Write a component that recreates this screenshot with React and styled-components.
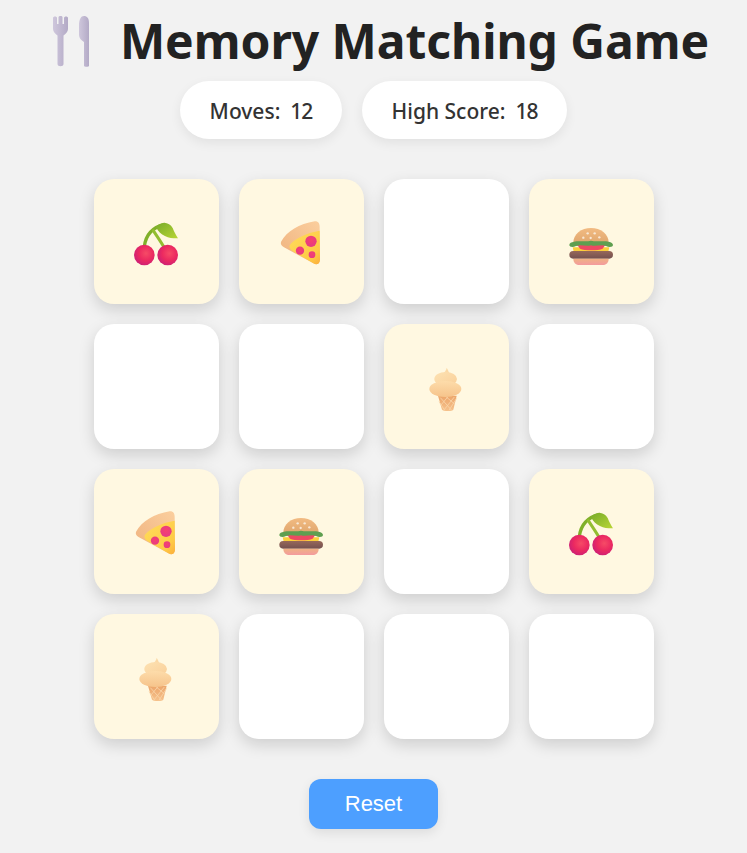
import React from 'react';
import styled, { createGlobalStyle } from 'styled-components';

const Global = createGlobalStyle`
  html, body { margin: 0; padding: 0; background: #f2f2f2; }
  body { font-family: "Noto Sans", "Open Sans", sans-serif; color: #222; }
`;

const Page = styled.main`
  display: flex;
  flex-direction: column;
  align-items: center;
  height: 853px;
  overflow: hidden;
`;

const Title = styled.h1`
  display: flex;
  align-items: center;
  gap: 12px;
  height: 81px;
  margin: 0 0 0 10px;
  font-family: "Noto Sans", "Open Sans", sans-serif;
  font-size: 48px;
  font-weight: 700;
  line-height: 81px;
  letter-spacing: -0.05px;
  color: #222;
  white-space: nowrap;
`;

const TitleIcon = styled.svg`
  width: 60px;
  height: 60px;
  flex: none;
`;

const Stats = styled.div`
  display: flex;
  gap: 20px;
  margin-bottom: 40px;
`;

const Pill = styled.div`
  display: flex;
  gap: 10px;
  align-items: center;
  justify-content: center;
  height: 58px;
  padding-top: 2px;
  box-sizing: border-box;
  width: ${p => p.$w}px;
  background: #fff;
  border-radius: 29px;
  box-shadow: 0 4px 12px rgba(0, 0, 0, 0.07);
  font-size: 21px;
  font-weight: 500;
  color: #333;
  white-space: nowrap;
`;

const Score = styled.span`
  letter-spacing: -1px;
`;

const Board = styled.div`
  display: grid;
  grid-template-columns: repeat(4, 125px);
  grid-auto-rows: 125px;
  gap: 20px;
`;

const Card = styled.div`
  display: flex;
  align-items: center;
  justify-content: center;
  border-radius: 20px;
  background: ${p => (p.$open ? '#fff8e1' : '#ffffff')};
  box-shadow: 0 6px 16px rgba(0, 0, 0, 0.15);
`;

const Emoji = styled.svg`
  width: 70px;
  height: 70px;
  margin: 7px 1px 0 0;
`;

const ResetButton = styled.button`
  width: 129px;
  height: 50px;
  margin-top: 40px;
  padding: 0;
  border: none;
  border-radius: 12px;
  background: #4d9fff;
  color: #fff;
  font-family: "Liberation Sans", Arial, sans-serif;
  font-size: 22px;
  box-shadow: 0 4px 12px rgba(0, 0, 0, 0.09);
`;

const Defs = () => (
  <svg width="0" height="0" style={{ position: 'absolute' }}>
    <defs>
      <radialGradient id="cherry" cx="0.58" cy="0.42" r="0.62">
        <stop offset="0" stopColor="#f64b66" />
        <stop offset="0.55" stopColor="#ec2a60" />
        <stop offset="1" stopColor="#cc1f76" />
      </radialGradient>
      <linearGradient id="leaf" x1="0" y1="0" x2="1" y2="1">
        <stop offset="0" stopColor="#78ac2a" />
        <stop offset="1" stopColor="#b9d535" />
      </linearGradient>
      <linearGradient id="crust" x1="0" y1="1" x2="1" y2="0">
        <stop offset="0" stopColor="#efb27e" />
        <stop offset="1" stopColor="#fbcf9e" />
      </linearGradient>
      <linearGradient id="cheese" x1="0" y1="0" x2="1" y2="1">
        <stop offset="0" stopColor="#ffdd5c" />
        <stop offset="0.75" stopColor="#fecb45" />
        <stop offset="1" stopColor="#fcae3c" />
      </linearGradient>
      <radialGradient id="pep" cx="0.5" cy="0.4" r="0.6">
        <stop offset="0" stopColor="#f6416f" />
        <stop offset="1" stopColor="#e63a84" />
      </radialGradient>
      <linearGradient id="bun" x1="0" y1="0" x2="0" y2="1">
        <stop offset="0" stopColor="#f2bb82" />
        <stop offset="1" stopColor="#dda36a" />
      </linearGradient>
      <linearGradient id="bunLow" x1="0" y1="0" x2="0" y2="1">
        <stop offset="0" stopColor="#efb283" />
        <stop offset="1" stopColor="#f49b9e" />
      </linearGradient>
      <linearGradient id="patty" x1="0" y1="0" x2="0" y2="1">
        <stop offset="0" stopColor="#96685a" />
        <stop offset="1" stopColor="#74504f" />
      </linearGradient>
      <linearGradient id="creamTop" x1="0" y1="0" x2="1" y2="1">
        <stop offset="0" stopColor="#fde2b2" />
        <stop offset="1" stopColor="#f9cf99" />
      </linearGradient>
      <linearGradient id="creamLow" x1="0" y1="0" x2="0" y2="1">
        <stop offset="0" stopColor="#fddcaa" />
        <stop offset="1" stopColor="#f6c48b" />
      </linearGradient>
      <linearGradient id="cone" x1="0" y1="0" x2="0" y2="1">
        <stop offset="0" stopColor="#eca56a" />
        <stop offset="1" stopColor="#f6c28c" />
      </linearGradient>
      <linearGradient id="cutlery" x1="0" y1="0" x2="1" y2="0">
        <stop offset="0" stopColor="#cfc7dc" />
        <stop offset="1" stopColor="#b3aac6" />
      </linearGradient>
    </defs>
  </svg>
);

const Cherry = () => (
  <Emoji viewBox="0 0 210 210">
    <g transform="translate(-3 0)">
      <path d="M73 110C76 82 90 54 133 43" fill="none" stroke="#80b02a" strokeWidth="10" strokeLinecap="round" />
      <path d="M100 62C110 78 122 94 132 112" fill="none" stroke="#93bd30" strokeWidth="9" strokeLinecap="round" />
      <path d="M108 50C124 34 148 36 158 54C163 66 168 76 174 85C152 86 120 80 108 50Z" fill="url(#leaf)" />
      <circle cx="73" cy="135" r="31" fill="url(#cherry)" />
      <circle cx="143" cy="135" r="31" fill="url(#cherry)" />
    </g>
  </Emoji>
);

const Pizza = () => (
  <Emoji viewBox="0 0 210 210">
    <path d="M46 94C62 64 100 42 146 34C156 33 161 40 161 50L162 150C161 162 152 166 142 160L54 112C44 106 43 100 46 94Z" fill="url(#crust)" />
    <path d="M74 102C90 84 124 68 161 62L162 150C161 162 152 166 142 160L78 122C70 116 68 108 74 102Z" fill="url(#cheese)" />
    <circle cx="135" cy="94" r="17" fill="url(#pep)" />
    <circle cx="102" cy="122" r="12.5" fill="url(#pep)" />
    <circle cx="138" cy="134" r="10" fill="url(#pep)" />
  </Emoji>
);

const Burger = () => (
  <Emoji viewBox="0 0 210 210">
    <path d="M52 98C52 72 76 54 105 54C134 54 158 72 158 98L158 108H52Z" fill="url(#bun)" />
    <g fill="#f8e8d6">
      <circle cx="95" cy="70" r="3.5" /><circle cx="116" cy="70" r="3.5" /><circle cx="82" cy="83" r="3.5" /><circle cx="104" cy="84" r="3.5" /><circle cx="130" cy="82" r="3.5" />
    </g>
    <path d="M50 112H160L156 128H54Z" fill="#fbcf3b" />
    <path d="M62 102H150L140 116C126 122 86 122 72 116Z" fill="#ee4a62" />
    <path d="M40 105C40 99 46 96 54 95C72 91 88 97 105 92C122 97 140 91 158 95C166 96 171 100 171 105C171 111 160 113 150 108C136 102 120 111 105 106C90 111 76 102 60 108C50 113 40 111 40 105Z" fill="#5f9f50" />
    <rect x="40" y="123" width="131" height="23" rx="11.5" fill="url(#patty)" />
    <path d="M52 146H158C158 157 152 165 140 165H70C58 165 52 157 52 146Z" fill="url(#bunLow)" />
  </Emoji>
);

const IceCream = () => (
  <Emoji viewBox="0 0 210 210">
    <path d="M81 122H137L127 164C125 169 96 169 93 164Z" fill="url(#cone)" />
    <g stroke="#f9d5a8" strokeWidth="2.5" fill="none">
      <path d="M88 128L122 166M106 126L132 148M84 140L100 164M130 126L98 166M110 126L90 150M137 130L114 166" />
    </g>
    <path d="M107 38C111 44 113 50 115 56C121 62 118 70 108 72H100C92 72 92 58 100 52C103 48 106 44 107 38Z" fill="url(#creamTop)" />
    <ellipse cx="104" cy="72" rx="34" ry="21" fill="url(#creamTop)" />
    <ellipse cx="103" cy="102" rx="48" ry="24" fill="url(#creamLow)" />
  </Emoji>
);

const CARDS = [
  Cherry, Pizza, null, Burger,
  null, null, IceCream, null,
  Pizza, Burger, null, Cherry,
  IceCream, null, null, null,
];

export default function App() {
  return (
    <Page>
      <Global />
      <Defs />
      <Title>
        <TitleIcon viewBox="0 0 60 60">
          <path d="M5 7C5 5 9 5 9 7V13H10.5V6C10.5 4.5 14.5 4.5 14.5 6V13H16V7C16 5 20 5 20 7V18C20 21 17.5 23 15.5 24.5V53C15.5 56 9.5 56 9.5 53V24.5C7.5 23 5 21 5 18Z" fill="url(#cutlery)" />
          <path d="M31 15C31 8 33 5 36 5C39 5 41 7 41 12V55C41 56 36 56 36 55V31C33 29 31 27 31 24Z" fill="url(#cutlery)" />
        </TitleIcon>
        Memory Matching Game
      </Title>
      <Stats>
        <Pill $w={162}><span>Moves:</span><Score>12</Score></Pill>
        <Pill $w={205}><span>High Score:</span><Score>18</Score></Pill>
      </Stats>
      <Board>
        {CARDS.map((Icon, i) => (
          <Card key={i} $open={!!Icon}>{Icon && <Icon />}</Card>
        ))}
      </Board>
      <ResetButton>Reset</ResetButton>
    </Page>
  );
}
